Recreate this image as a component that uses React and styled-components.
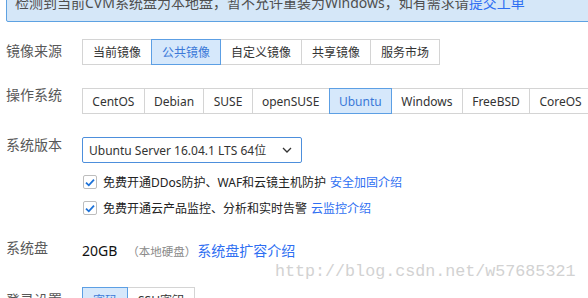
import React from "react";
import styled, { createGlobalStyle } from "styled-components";

const Global = createGlobalStyle`
  body {
    margin: 0;
    background: #fff;
    font-family: "Noto Sans", "Noto Sans CJK SC", sans-serif;
  }
`;

const Page = styled.div`
  position: relative;
  width: 588px;
  height: 298px;
  overflow: hidden;
  padding-left: 6px;
  box-sizing: border-box;
`;

const Notice = styled.div`
  margin-top: -16px;
  width: 620px;
  padding: 8px;
  line-height: 20px;
  font-size: 14px;
  color: #4f4f4f;
  background: #d5e7f8;
  border: 1px solid #5ea2e2;
  border-radius: 2px;
  white-space: nowrap;
`;

const Link = styled.a`
  color: #2f6ff2;
  text-decoration: none;
  margin-left: ${(p) => p.$gap || 0}px;
`;

const Row = styled.div`
  display: flex;
  align-items: flex-start;
  margin-top: ${(p) => p.$top}px;
`;

const Label = styled.div`
  width: 76px;
  flex-shrink: 0;
  font-size: 14px;
  line-height: 20px;
  color: #585858;
  margin-top: ${(p) => p.$shift || 0}px;
`;

const Segments = styled.div`
  display: flex;
`;

const Seg = styled.div`
  height: 26px;
  box-sizing: border-box;
  padding: 0 ${(p) => p.$pad || 10}px;
  display: flex;
  align-items: center;
  font-size: 12px;
  white-space: nowrap;
  color: ${(p) => (p.$active ? "#3a78d8" : "#333")};
  background: ${(p) => (p.$active ? "#d6e8fb" : "#fff")};
  border: 1px solid ${(p) => (p.$active ? "#5c9fe4" : "#d4d4d4")};
  margin-left: -1px;
  position: relative;
  z-index: ${(p) => (p.$active ? 1 : 0)};
  &:first-child {
    margin-left: 0;
  }
`;

const Select = styled.div`
  width: 220px;
  height: 26px;
  box-sizing: border-box;
  border: 1px solid #4d8fdc;
  border-radius: 2px;
  display: flex;
  align-items: center;
  justify-content: space-between;
  padding: 0 9px 0 6px;
  font-size: 12px;
  color: #333;
`;

const Checks = styled.div`
  padding-left: 76px;
  margin-top: 9px;
  display: flex;
  flex-direction: column;
  gap: 6px;
`;

const CheckRow = styled.div`
  display: flex;
  align-items: center;
  height: 20px;
  font-size: 12px;
  color: #222;
  white-space: nowrap;
`;

const Box = styled.span`
  width: 14px;
  height: 14px;
  box-sizing: border-box;
  border: 1px solid #bdbdbd;
  border-radius: 2px;
  background: #fff;
  margin: 0 6px 0 1px;
  display: flex;
  align-items: center;
  justify-content: center;
`;

const Value = styled.div`
  display: flex;
  align-items: baseline;
  font-size: 14px;
  line-height: 20px;
  margin-top: 3px;
  white-space: nowrap;
`;

const Size = styled.span`
  color: #111;
`;

const Muted = styled.span`
  color: #8a8a8a;
  font-size: 11.5px;
  margin: 0 1px 0 10px;
`;

const Watermark = styled.div`
  position: absolute;
  left: 275px;
  top: 262px;
  font-family: "Liberation Mono", monospace;
  font-size: 16.7px;
  color: #d2d2d2;
  white-space: nowrap;
`;

const Check = () => (
  <Box>
    <svg width="10" height="9" viewBox="0 0 10 9">
      <polyline
        points="1,4.6 3.8,7.3 9,1.6"
        fill="none"
        stroke="#1d72d8"
        strokeWidth="1.8"
      />
    </svg>
  </Box>
);

const sources = ["当前镜像", "公共镜像", "自定义镜像", "共享镜像", "服务市场"];
const systems = ["CentOS", "Debian", "SUSE", "openSUSE", "Ubuntu", "Windows", "FreeBSD", "CoreOS"];

export default function App() {
  return (
    <Page>
      <Global />
      <Notice>
        检测到当前CVM系统盘为本地盘，暂不允许重装为Windows，如有需求请
        <Link href="#">提交工单</Link>
      </Notice>

      <Row $top={17}>
        <Label $shift={2}>镜像来源</Label>
        <Segments>
          {sources.map((s) => (
            <Seg key={s} $active={s === "公共镜像"}>
              {s}
            </Seg>
          ))}
        </Segments>
      </Row>

      <Row $top={23}>
        <Label $shift={-3}>操作系统</Label>
        <Segments>
          {systems.map((s) => (
            <Seg key={s} $pad={9.3} $active={s === "Ubuntu"}>
              {s}
            </Seg>
          ))}
        </Segments>
      </Row>

      <Row $top={23}>
        <Label $shift={-2}>系统版本</Label>
        <Select>
          <span>Ubuntu Server 16.04.1 LTS 64位</span>
          <svg width="10" height="6" viewBox="0 0 10 6">
            <polyline points="1,1 5,5 9,1" fill="none" stroke="#333" strokeWidth="1.3" />
          </svg>
        </Select>
      </Row>

      <Checks>
        <CheckRow>
          <Check />
          免费开通DDos防护、WAF和云镜主机防护
          <Link href="#" $gap={4}>安全加固介绍</Link>
        </CheckRow>
        <CheckRow>
          <Check />
          免费开通云产品监控、分析和实时告警
          <Link href="#" $gap={4}>云监控介绍</Link>
        </CheckRow>
      </Checks>

      <Row $top={20}>
        <Label>系统盘</Label>
        <Value>
          <Size>20GB</Size>
          <Muted>（本地硬盘）</Muted>
          <Link href="#">系统盘扩容介绍</Link>
        </Value>
      </Row>

      <Row $top={25}>
        <Label $shift={3}>登录设置</Label>
        <Segments>
          <Seg $active>密码</Seg>
          <Seg>SSH密钥</Seg>
        </Segments>
      </Row>

      <Watermark>http://blog.csdn.net/w57685321</Watermark>
    </Page>
  );
}
